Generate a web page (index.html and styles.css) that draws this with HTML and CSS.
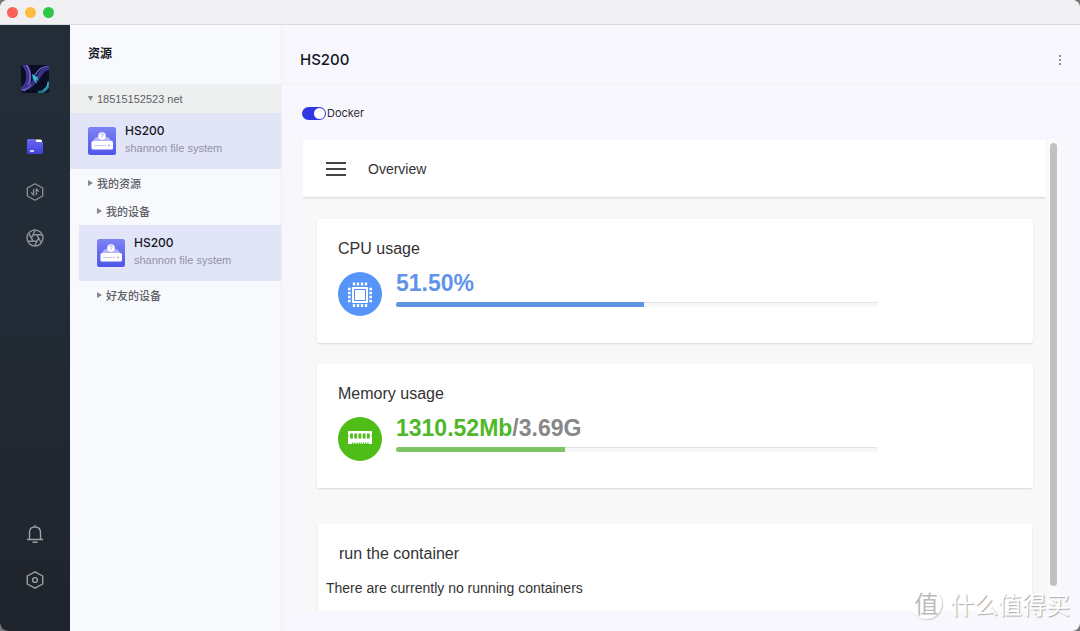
FILE: index.html
```html
<!DOCTYPE html>
<html lang="zh-CN">
<head>
<meta charset="utf-8">
<title>HS200</title>
<link rel="stylesheet" href="styles.css">
</head>
<body>
<svg class="defs" aria-hidden="true">
  <defs>
    <linearGradient id="disk-bg" x1="0" y1="0" x2="0" y2="1"><stop offset="0" stop-color="#7d83f4"/><stop offset="1" stop-color="#4f55e8"/></linearGradient>
    <linearGradient id="folder-bg" x1="0" y1="0" x2="0" y2="1"><stop offset="0" stop-color="#6a6cf2"/><stop offset="1" stop-color="#3f3fdc"/></linearGradient>
    <symbol id="disk" viewBox="0 0 28 28">
      <rect width="28" height="28" rx="2.500" fill="url(#disk-bg)"/>
      <path d="M4 15 7 11Q8 10 10 10H18Q20 10 21 11L24 15Z" fill="#b3b7fa"/>
      <circle cx="14" cy="9" r="3.800" fill="#fff"/>
      <path d="M12.700 8Q12.700 6.700 14 6.700T15.300 8Q15.300 8.700 14 9.500V11" fill="none" stroke="#9fa4f6" stroke-width=".8"/>
      <rect x="3.500" y="14" width="21.500" height="8.500" rx="1.500" fill="#fff"/>
      <path d="M6 18.500H18" stroke="#c4c7f5"/>
      <circle cx="21" cy="18.500" r="1" fill="#b5a5dd"/>
    </symbol>
  </defs>
</svg>
<div class="window">
  <header class="titlebar">
    <button class="light light-close" aria-label="Close"></button>
    <button class="light light-min" aria-label="Minimize"></button>
    <button class="light light-max" aria-label="Zoom"></button>
  </header>
  <div class="app">
    <nav class="rail">
      <svg class="avatar" viewBox="0 0 28 28" aria-hidden="true">
        <defs><clipPath id="av"><rect width="28" height="28" rx="2"/></clipPath></defs>
        <g clip-path="url(#av)">
          <rect width="28" height="28" fill="#0b0d24"/>
          <path d="M3-1C10 7 9 19 1 25" fill="none" stroke="#3c3488" stroke-width="5"/>
          <path d="M5-1C11 8 11 18 3 26" fill="none" stroke="#8273dd" stroke-width="1.300"/>
          <path d="M29 3C20 3 20 11 12 18 9 22 5 24 0 23" fill="none" stroke="#3b3486" stroke-width="4"/>
          <path d="M29 1C18 1 17 7 13 11M10 20C7 24 4 25 0 25" fill="none" stroke="#7867cf" stroke-width="1.200"/>
          <path d="M11 9 16 12 18 16 15 14 16 19 12 14Z" fill="#35bfd2"/>
          <path d="M28 16C28 23 23 28 17 27" fill="none" stroke="#1f7488" stroke-width="3"/>
          <path d="M27 18C27 22 25 24 22 25" fill="none" stroke="#4cc5c8"/>
        </g>
      </svg>
      <button class="rail-btn" aria-label="Files">
        <svg viewBox="0 0 18 18"><path d="M1 3.500Q1 2 2.500 2H8L10 4.500H15.500Q17 4.500 17 6V15.500Q17 17 15.500 17H2.500Q1 17 1 15.500Z" fill="url(#folder-bg)"/><path d="M9 2.500H14.500Q16 2.500 16 4V5H10.500Z" fill="#fff"/><path d="M4 14H8" stroke="#fff" stroke-width="1.300"/></svg>
      </button>
      <button class="rail-btn" aria-label="Transfers">
        <svg viewBox="0 0 18 18" fill="none" stroke="#8d929a" stroke-width="1.300"><path d="M9 .8 16.700 5V13L9 17.200 1.300 13V5Z" stroke-linejoin="round"/><path d="M7.600 6V12L5.200 9.500M10.400 12V6L12.800 8.500"/></svg>
      </button>
      <button class="rail-btn" aria-label="Discover">
        <svg viewBox="0 0 18 18" fill="none" stroke="#8d929a" stroke-width="1.400"><circle cx="9" cy="9" r="8"/><path d="M7.200 5.800H10.800L12.700 9 10.800 12.200H7.200L5.300 9ZM7.200 5.800H16M10.800 5.800 15.300 13.700M12.700 9 8.700 16.800M10.800 12.200H2M7.200 12.200 2.700 4.300M5.300 9 9.300 1.200"/></svg>
      </button>
      <span class="rail-space"></span>
      <button class="rail-btn" aria-label="Notifications">
        <svg viewBox="0 0 18 18" fill="none" stroke="#9da1a8" stroke-width="1.400"><path d="M3.500 14V7.500Q3.500 2 9 2T14.500 7.500V14M1 14.500H17M6.500 17.200H11.500M9 2V.3"/></svg>
      </button>
      <button class="rail-btn" aria-label="Settings">
        <svg viewBox="0 0 18 18" fill="none" stroke="#9da1a8" stroke-width="1.400"><path d="M9 .8 16.700 5V13L9 17.200 1.300 13V5Z" stroke-linejoin="round"/><circle cx="9" cy="9" r="2.400"/></svg>
      </button>
    </nav>
    <aside class="sidebar">
      <h2 class="sidebar-title">资源</h2>
      <button class="group group-open"><span class="arrow arrow-down"></span>18515152523 net</button>
      <button class="device">
        <svg class="device-icon" aria-hidden="true"><use href="#disk"/></svg>
        <span class="device-text"><span class="device-name">HS200</span><span class="device-sub">shannon file system</span></span>
      </button>
      <button class="group"><span class="arrow"></span>我的资源</button>
      <div class="nested">
        <button class="group"><span class="arrow"></span>我的设备</button>
        <button class="device">
          <svg class="device-icon" aria-hidden="true"><use href="#disk"/></svg>
          <span class="device-text"><span class="device-name">HS200</span><span class="device-sub">shannon file system</span></span>
        </button>
        <button class="group"><span class="arrow"></span>好友的设备</button>
      </div>
    </aside>
    <main class="main">
      <header class="main-head">
        <h1 class="main-title">HS200</h1>
        <button class="more" aria-label="More"><i></i><i></i><i></i></button>
      </header>
      <label class="docker"><input class="switch" type="checkbox" checked>Docker</label>
      <div class="frame">
        <div class="panel">
          <div class="panel-head">
            <button class="menu" aria-label="Menu"><i></i><i></i><i></i></button>
            <span>Overview</span>
          </div>
          <div class="cards">
            <section class="card">
              <h3 class="card-title">CPU usage</h3>
              <div class="metric">
                <svg class="metric-icon" viewBox="0 0 44 44" aria-hidden="true">
                  <circle cx="22" cy="22" r="22" fill="#5794f7"/>
                  <path d="M16 10.500V35M20 10.500V35M24 10.500V35M28 10.500V35M10 17H34M10 21H34M10 25H34M10 29H34" stroke="#fff" stroke-width="2.400"/>
                  <rect x="12.700" y="13.500" width="18.600" height="18.600" fill="#5794f7"/>
                  <rect x="14" y="15" width="16" height="16" rx="1" fill="#fff"/>
                  <rect x="16.500" y="17.500" width="11" height="11" fill="none" stroke="#5794f7"/>
                </svg>
                <div class="metric-body">
                  <div class="value value-cpu">51.50%</div>
                  <div class="bar"><div class="fill fill-cpu" style="width:51.5%"></div></div>
                </div>
              </div>
            </section>
            <section class="card">
              <h3 class="card-title">Memory usage</h3>
              <div class="metric">
                <svg class="metric-icon" viewBox="0 0 44 44" aria-hidden="true">
                  <circle cx="22" cy="22" r="22" fill="#4fbd17"/>
                  <path d="M10 14H34V17.500Q32.500 18.500 34 19.500V27H10V19.500Q11.500 18.500 10 17.500Z" fill="#fff"/>
                  <path d="M13.500 16.500V21.500M17.700 16.500V21.500M21.900 16.500V21.500M26.100 16.500V21.500M30.300 16.500V21.500" stroke="#4fbd17" stroke-width="2.800"/>
                  <path d="M14 26.500H31" stroke="#4fbd17" stroke-width="2" stroke-dasharray="1.200 1"/>
                </svg>
                <div class="metric-body">
                  <div class="value value-mem">1310.52Mb<span class="value-total">/3.69G</span></div>
                  <div class="bar"><div class="fill fill-mem" style="width:35%"></div></div>
                </div>
              </div>
            </section>
            <section class="card card-run">
              <h3 class="card-title">run the container</h3>
              <p class="empty">There are currently no running containers</p>
            </section>
          </div>
        </div>
        <div class="track"><div class="thumb"></div></div>
      </div>
    </main>
  </div>
  <div class="watermark"><span class="mark">值</span><span class="mark-text">什么值得买</span></div>
</div>
</body>
</html>
```
FILE: styles.css
```css
* { box-sizing: border-box; }
body {
  margin: 0;
  background: #777;
  font-family: Inter, "Noto Sans CJK SC", sans-serif;
  color: #14161f;
}
button {
  border: 0;
  padding: 0;
  background: none;
  font: inherit;
  color: inherit;
  text-align: left;
}
h1, h2, h3, p { margin: 0; }
.defs { position: absolute; width: 0; height: 0; }
.window {
  position: relative;
  display: flex;
  flex-direction: column;
  height: 100vh;
  border-radius: 8px;
  overflow: hidden;
  background: #f7f7fd;
}
.titlebar {
  display: flex;
  align-items: center;
  gap: 7px;
  height: 25px;
  padding: 0 7px;
  background: #f0f0f2;
  border-bottom: 1px solid #dcdcdf;
}
.light { width: 11px; height: 11px; border-radius: 50%; }
.light-close { background: #fb5f57; }
.light-min { background: #fbbd3c; }
.light-max { background: #2fc745; }
.app { display: flex; flex: 1; min-height: 0; }

.rail {
  display: flex;
  flex-direction: column;
  align-items: center;
  width: 70px;
  padding: 40px 0 42px;
  gap: 28px;
  background: linear-gradient(#232d38, #222b36 45%, #20242c);
}
.avatar { width: 28px; height: 28px; margin-bottom: 16px; }
.rail-btn { width: 18px; height: 18px; }
.rail-btn svg { display: block; width: 18px; height: 18px; }
.rail-space { flex: 1; }

.sidebar {
  width: 212px;
  background: #f8f9fc;
  border-right: 1px solid #eeeff5;
}
.sidebar-title {
  height: 59px;
  padding-left: 18px;
  line-height: 58px;
  font-size: 12px;
  font-weight: 700;
}
.group {
  display: flex;
  align-items: center;
  gap: 4px;
  width: 100%;
  height: 28px;
  padding-left: 18px;
  font-family: "Liberation Sans", "Noto Sans CJK SC", sans-serif;
  font-size: 11px;
  font-weight: 500;
  color: #5c5f66;
}
.group-open { height: 29px; background: #eef0f0; }
.arrow {
  width: 5px;
  height: 6px;
  background: #85888e;
  clip-path: polygon(0 0, 100% 50%, 0 100%);
}
.arrow-down { height: 5px; clip-path: polygon(0 0, 100% 0, 50% 100%); }
.device {
  display: flex;
  align-items: center;
  gap: 9px;
  width: 100%;
  height: 56px;
  padding-left: 18px;
  background: #e2e4f8;
}
.device-icon { width: 28px; height: 28px; }
.device-text { display: flex; flex-direction: column; gap: 2px; padding-bottom: 4px; }
.device-name { font-size: 12px; line-height: 17px; font-weight: 500; }
.device-sub {
  font-family: "Liberation Sans", Arial, sans-serif;
  font-size: 11px;
  line-height: 15px;
  color: #9093a5;
}
.nested { padding-left: 9px; }

.main { display: flex; flex-direction: column; flex: 1; min-width: 0; }
.main-head {
  display: flex;
  align-items: center;
  justify-content: space-between;
  height: 59px;
  padding: 10px 19px 0 18px;
  border-bottom: 1px solid #f0f0f5;
}
.main-title { font-size: 15px; font-weight: 500; }
.more { display: flex; flex-direction: column; gap: 2px; padding-top: 2px; }
.more i { width: 2px; height: 2px; border-radius: 50%; background: #707078; }
.docker {
  display: flex;
  align-items: center;
  align-self: flex-start;
  gap: 1px;
  height: 14px;
  margin: 22px 20px 20px;
  font-size: 11px;
  color: #2c2d33;
}
.switch {
  appearance: none;
  display: flex;
  justify-content: flex-end;
  width: 24px;
  height: 13px;
  margin: 0;
  padding: 1px;
  border-radius: 7px;
  background: #3038e2;
}
.switch::before { content: ""; width: 11px; height: 11px; border-radius: 50%; background: #fff; }
.switch:not(:checked) { justify-content: flex-start; background: #bbb; }

.frame {
  display: flex;
  flex: 1;
  min-height: 0;
  margin: 0 20px 20px 21px;
  font-family: "Liberation Sans", Arial, sans-serif;
  color: #333;
}
.panel { flex: 1; min-width: 0; overflow: hidden; background: #f8f8f8; }
.panel-head {
  display: flex;
  align-items: center;
  gap: 22px;
  height: 57px;
  padding-left: 23px;
  background: #fff;
  box-shadow: 0 1px 2px #d4d4d4;
  font-size: 14px;
}
.menu { display: flex; flex-direction: column; gap: 4px; width: 20px; }
.menu i { height: 2px; background: #444; }
.cards { display: flex; flex-direction: column; gap: 21px; padding: 22px 13px 0 14px; }
.card {
  height: 124px;
  padding: 20px 21px;
  border-radius: 2px;
  background: #fff;
  box-shadow: 0 1px 2px #dadada;
}
.card-title { font-size: 16px; line-height: 20px; font-weight: 400; }
.metric { display: flex; gap: 14px; padding-top: 13px; }
.metric-icon { flex: none; width: 44px; height: 44px; }
.metric-body { flex: 0 1 482px; }
.value { font-size: 23px; line-height: 24px; font-weight: 700; margin-top: -1px; }
.value-cpu { color: #6094e8; }
.value-mem { color: #4fb72a; }
.value-total { color: #888; }
.bar { height: 5px; margin-top: 7px; border-top: 1px solid #e2e2ea; border-radius: 3px; background: #f7f7fa; }
.fill { height: 5px; margin-top: -1px; border-radius: 3px 0 0 3px; }
.fill-cpu { background: #6094e3; }
.fill-mem { background: #7fc463; }
.card-run { margin: 15px 1px 0; padding-left: 8px; }
.card-run .card-title { padding-left: 13px; }
.empty { margin-top: 16px; font-size: 14px; line-height: 16px; }
.track { width: 13px; padding: 3px 3px 25px; margin-left: 1px; background: #fafafb; }
.thumb { width: 7px; height: 100%; border-radius: 4px; background: #c1c1c1; }

.watermark {
  position: absolute;
  right: 10px;
  bottom: 12px;
  display: flex;
  align-items: center;
  gap: 8px;
  font-family: "Noto Sans CJK SC", sans-serif;
  color: #fff;
  text-shadow: 1px 1px 1px #aaa;
}
.mark {
  width: 31px;
  height: 31px;
  border-radius: 50%;
  background: #fff;
  box-shadow: 1px 1px 1px #ccc;
  color: #bbb;
  font-size: 24px;
  line-height: 30px;
  text-align: center;
  text-shadow: none;
}
.mark-text { font-size: 24px; line-height: 30px; }
```
